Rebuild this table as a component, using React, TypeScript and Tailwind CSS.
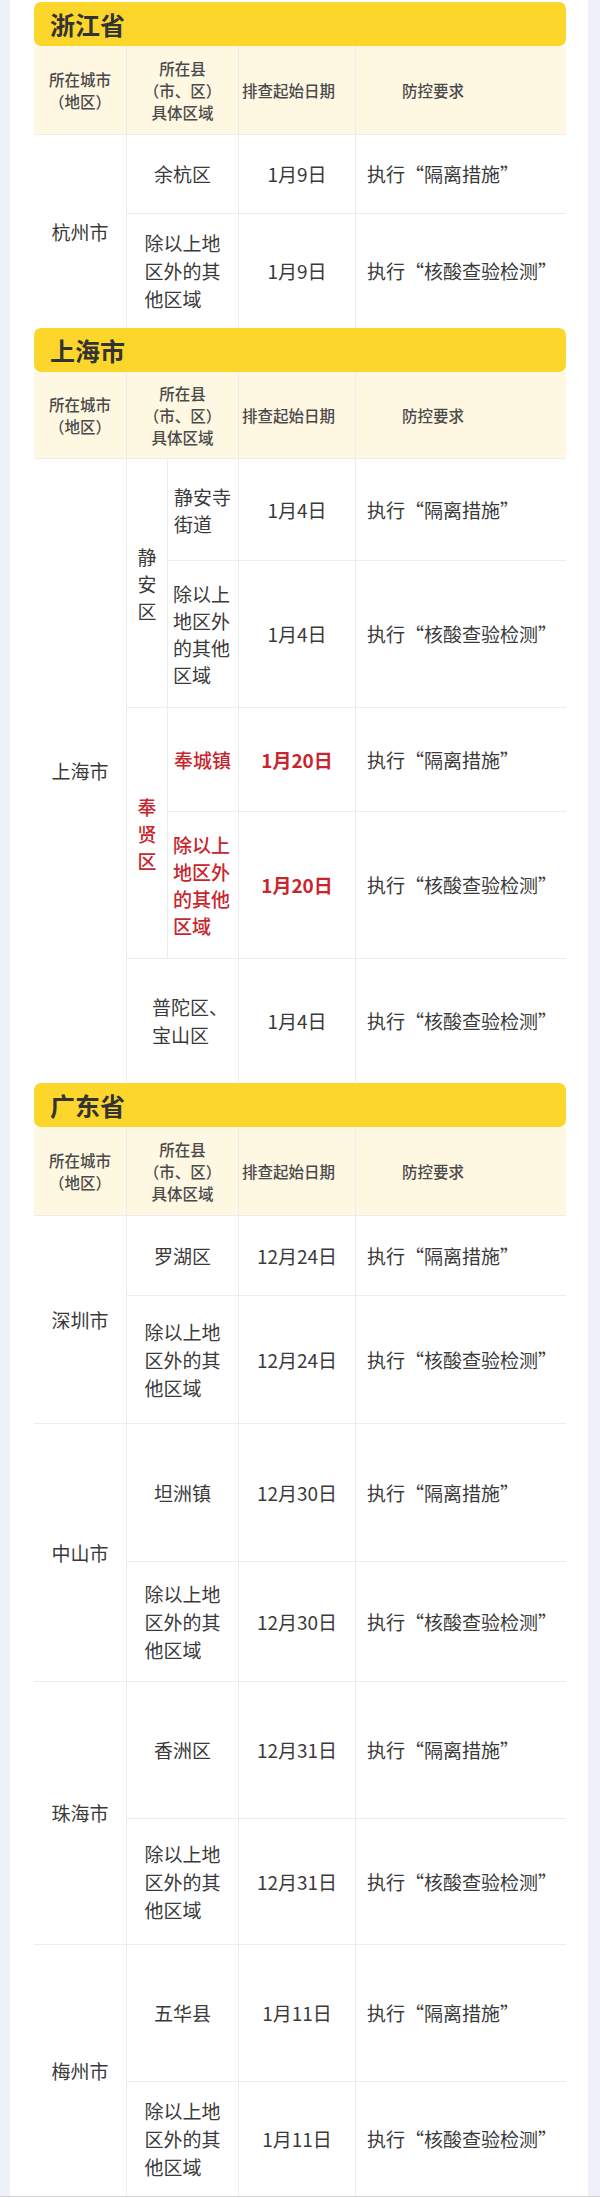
import type { ReactNode } from "react";

const cell = "bg-white flex items-center";
const head = "bg-[#fef7e2] flex items-center text-[15.5px] leading-[22px] font-medium text-[#4a4a4a]";
const red = "text-[#c8262e]";

function Bar({ title }: { title: string }) {
  return (
    <div className="h-[44px] rounded-[7px] bg-[#fdd62c] flex items-center pl-[16px] text-[25px] font-bold text-[#333] leading-none">
      {title}
    </div>
  );
}

function Header({ split }: { split?: boolean }) {
  return (
    <>
      <div className={`${head} justify-center`}>
        <p className="text-center">所在城市<br />（地区）</p>
      </div>
      <div className={`${head} justify-center ${split ? "col-span-2" : ""}`}>
        <p className="text-center">所在县<br />（市、区）<br />具体区域</p>
      </div>
      <div className={`${head} pl-[3px]`}>排查起始日期</div>
      <div className={`${head} pl-[46px]`}>防控要求</div>
    </>
  );
}

function Block({ children }: { children: ReactNode }) {
  return <p className="text-left">{children}</p>;
}

const other = (
  <Block>
    除以上地<br />区外的其<br />他区域
  </Block>
);

function Rows({ city, items }: { city: string; items: [ReactNode, string, string][] }) {
  return (
    <>
      <div className={`${cell} justify-center row-span-2`}>{city}</div>
      {items.map(([area, date, req], i) => (
        <Row key={i} area={area} date={date} req={req} />
      ))}
    </>
  );
}

function Row({ area, date, req }: { area: ReactNode; date: string; req: string }) {
  return (
    <>
      <div className={`${cell} justify-center`}>{area}</div>
      <div className={`${cell} justify-center`}>{date}</div>
      <div className={`${cell} pl-[11px]`}>{req}</div>
    </>
  );
}

const iso = "执行“隔离措施”";
const nat = "执行“核酸查验检测”";

export default function App() {
  return (
    <div className="bg-[#eef0fa] pl-[10px] pr-[12px] border-b border-[#d4d4d4] font-['Noto_Sans_CJK_SC',sans-serif]">
      <div className="bg-white pl-[24px] pr-[22px] pt-[2px] text-[19px] leading-[28px] text-[#3a3a3a]">
        {/* 浙江省 */}
        <Bar title="浙江省" />
        <div className="grid grid-cols-[92px_111px_116px_210px] grid-rows-[88px_78px_114px] gap-px bg-[#ececec]">
          <Header />
          <Rows city="杭州市" items={[["余杭区", "1月9日", iso], [other, "1月9日", nat]]} />
        </div>

        {/* 上海市 */}
        <Bar title="上海市" />
        <div className="grid grid-cols-[92px_40px_70px_116px_210px] grid-rows-[86px_101px_146px_103px_146px_123px] gap-px bg-[#ececec]">
          <Header split />
          <div className={`${cell} justify-center row-span-5`}>上海市</div>
          <div className={`${cell} justify-center row-span-2 leading-[27px]`}>
            <p className="text-center">静<br />安<br />区</p>
          </div>
          <div className={`${cell} pl-[6px] leading-[27px]`}>
            <Block>静安寺<br />街道</Block>
          </div>
          <div className={`${cell} justify-center`}>1月4日</div>
          <div className={`${cell} pl-[11px]`}>{iso}</div>
          <div className={`${cell} pl-[5px] leading-[27px]`}>
            <Block>除以上<br />地区外<br />的其他<br />区域</Block>
          </div>
          <div className={`${cell} justify-center`}>1月4日</div>
          <div className={`${cell} pl-[11px]`}>{nat}</div>
          <div className={`${cell} justify-center row-span-2 leading-[27px] font-medium ${red}`}>
            <p className="text-center">奉<br />贤<br />区</p>
          </div>
          <div className={`${cell} pl-[6px] font-medium ${red}`}>奉城镇</div>
          <div className={`${cell} justify-center font-bold ${red}`}>1月20日</div>
          <div className={`${cell} pl-[11px]`}>{iso}</div>
          <div className={`${cell} pl-[5px] leading-[27px] font-medium ${red}`}>
            <Block>除以上<br />地区外<br />的其他<br />区域</Block>
          </div>
          <div className={`${cell} justify-center font-bold ${red}`}>1月20日</div>
          <div className={`${cell} pl-[11px]`}>{nat}</div>
          <div className={`${cell} col-span-2 pl-[25px]`}>
            <Block>普陀区、<br />宝山区</Block>
          </div>
          <div className={`${cell} justify-center`}>1月4日</div>
          <div className={`${cell} pl-[11px]`}>{nat}</div>
        </div>

        {/* 广东省 */}
        <div className="h-px" />
        <Bar title="广东省" />
        <div className="grid grid-cols-[92px_111px_116px_210px] grid-rows-[88px_79px_127px_137px_119px_136px_125px_136px_114px] gap-px bg-[#ececec]">
          <Header />
          <Rows city="深圳市" items={[["罗湖区", "12月24日", iso], [other, "12月24日", nat]]} />
          <Rows city="中山市" items={[["坦洲镇", "12月30日", iso], [other, "12月30日", nat]]} />
          <Rows city="珠海市" items={[["香洲区", "12月31日", iso], [other, "12月31日", nat]]} />
          <Rows city="梅州市" items={[["五华县", "1月11日", iso], [other, "1月11日", nat]]} />
        </div>
      </div>
    </div>
  );
}
